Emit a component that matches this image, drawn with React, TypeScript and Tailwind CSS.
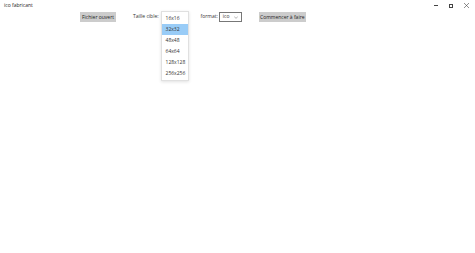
import React from "react";

const sizes = ["16x16", "32x32", "48x48", "64x64", "128x128", "256x256"];

export default function App() {
  return (
    <div className="relative h-[253px] w-[475px] bg-white font-['Open_Sans',sans-serif] text-[5px] text-[#333]">
      <div className="flex h-[11px] items-center justify-between pl-[4px]">
        <span className="text-[5px] text-[#222]">ico fabricant</span>
        <div className="flex h-full items-center text-[#333]">
          <span className="flex w-[15px] justify-center">
            <span className="block h-px w-[4px] bg-[#444]" />
          </span>
          <span className="flex w-[15px] justify-center">
            <span className="block h-[4px] w-[4px] border border-[#444]" />
          </span>
          <span className="flex w-[17px] justify-center">
            <svg width="5" height="5" viewBox="0 0 5 5" stroke="#444" strokeWidth="0.6">
              <path d="M0 0L5 5M5 0L0 5" />
            </svg>
          </span>
        </div>
      </div>
      <div className="mt-[1px] flex h-[10px] items-center pl-[80px]">
        <button className="h-[10px] w-[36px] bg-[#cccccc] text-[5px] leading-none text-[#222]">
          Fichier ouvert
        </button>
        <span className="ml-[17px]">Taille cible:</span>
        <div className="relative ml-[4px] h-[10px] w-[27px]">
          <div className="absolute left-[-2px] top-[-1px] w-[28px] border border-[#e0e0e0] bg-white py-[1px] shadow-[0_1px_3px_rgba(0,0,0,0.12)]">
            {sizes.map((s) => (
              <div
                key={s}
                className={
                  "flex h-[11px] items-center pl-[4px] " +
                  (s === "32x32" ? "bg-[#99ccf7]" : "")
                }
              >
                {s}
              </div>
            ))}
          </div>
        </div>
        <span className="ml-[11px]">format:</span>
        <div className="ml-[1px] flex h-[10px] w-[23px] items-center justify-between border border-[#777] px-[3px]">
          <span>ico</span>
          <svg width="4" height="3" viewBox="0 0 4 3" fill="none" stroke="#666" strokeWidth="0.5">
            <path d="M0.3 0.8L2 2.3L3.7 0.8" />
          </svg>
        </div>
        <button className="ml-[17px] h-[10px] w-[47px] bg-[#cccccc] text-[5px] leading-none text-[#222]">
          Commencer à faire
        </button>
      </div>
    </div>
  );
}
